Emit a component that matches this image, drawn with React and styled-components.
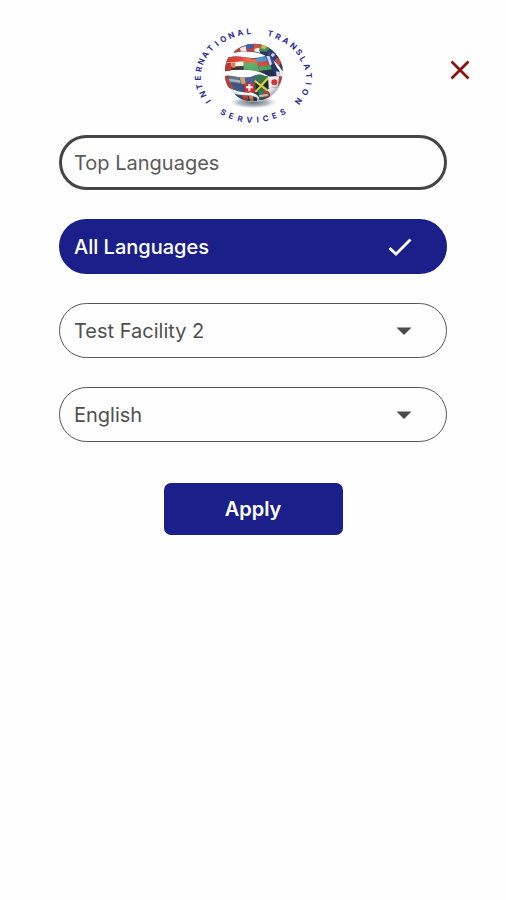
import React, { useState } from "react";
import styled, { createGlobalStyle, css } from "styled-components";

const GlobalStyle = createGlobalStyle`
  * {
    box-sizing: border-box;
  }

  body {
    margin: 0;
    background: #fefefe;
    font-family: Inter, "Open Sans", sans-serif;
  }
`;

const Page = styled.main`
  min-height: 100vh;
  padding: 15px 0 32px;
`;

const Header = styled.header`
  display: grid;
  grid-template-columns: 1fr auto 1fr;
  align-items: center;
  padding: 0 26px;
`;

const LogoSvg = styled.svg`
  grid-column: 2;
  display: block;
  width: 140px;
  height: 110px;
`;

const LogoText = styled.text`
  fill: #2c2c94;
  font-family: Inter, sans-serif;
  font-size: 24px;
  font-weight: 700;
`;

const CloseButton = styled.button`
  justify-self: end;
  display: grid;
  place-items: center;
  width: 40px;
  height: 40px;
  padding: 0;
  border: none;
  background: none;
  color: #8e1212;
  cursor: pointer;
`;

const FilterForm = styled.form`
  display: flex;
  flex-direction: column;
  gap: 29px;
  padding: 10px 59px 0;
`;

const pill = css`
  width: 100%;
  height: 55px;
  border-radius: 28px;
  font-family: inherit;
  font-size: 20px;
  line-height: 24px;
  cursor: pointer;
`;

const OptionButton = styled.button`
  ${pill}
  display: flex;
  align-items: center;
  justify-content: space-between;
  padding: 0 32px 0 12px;
  border: 3px solid ${(props) => (props.$active ? "#1b1f8a" : "#454545")};
  background: ${(props) => (props.$active ? "#1b1f8a" : "#fefefe")};
  color: ${(props) => (props.$active ? "#ffffff" : "#5a5a5a")};
  font-weight: ${(props) => (props.$active ? 500 : 400)};
`;

const SelectBox = styled.div`
  position: relative;
`;

const Select = styled.select`
  ${pill}
  display: block;
  appearance: none;
  padding: 0 56px 0 14px;
  border: 1px solid #555555;
  background: #fefefe;
  color: #505050;
`;

const Caret = styled.svg`
  position: absolute;
  top: 24px;
  right: 35px;
  pointer-events: none;
`;

const ApplyButton = styled.button`
  align-self: center;
  width: 179px;
  height: 52px;
  margin-top: 12px;
  border: none;
  border-radius: 7px;
  background: #1b1f8a;
  color: #ffffff;
  font-family: inherit;
  font-size: 20px;
  font-weight: 600;
  cursor: pointer;
`;

// Each letter: centre x, centre y, rotation in degrees
const ringWords = [
  {
    text: "INTERNATIONAL",
    spots: [
      [85, 245, -122], [69, 223, -112], [58, 200, -102], [54, 174, -91], [57, 148, -80],
      [64, 125, -68], [76, 104, -58], [91, 85, -49], [110, 71, -41], [130, 58, -33],
      [154, 46, -25], [180, 38, -16], [206, 34, -7],
    ],
  },
  {
    text: "TRANSLATION",
    spots: [
      [271, 41, 13], [294, 50, 24], [317, 62, 32], [340, 78, 41], [357, 96, 50],
      [369, 117, 60], [381, 140, 70], [387, 167, 83], [385, 191, 96], [375, 216, 110],
      [355, 243, 124],
    ],
  },
  {
    text: "SERVICES",
    spots: [
      [130, 277, 26], [154, 288, 19], [180, 296, 12], [208, 300, 4], [233, 299, -4],
      [257, 295, -11], [283, 287, -19], [308, 276, -27],
    ],
  },
];

const letterWidth = { I: 6, L: 14, E: 15, S: 15, T: 16, R: 15, C: 18, A: 18, V: 18, N: 18, O: 18 };
const capHeight = 17;

// Moves a letter's centre to the start of its baseline
const letterOrigin = (letter, [cx, cy, angle]) => {
  const rad = (angle * Math.PI) / 180;
  const dx = -letterWidth[letter] / 2;
  const dy = capHeight / 2;
  return [
    cx + dx * Math.cos(rad) - dy * Math.sin(rad),
    cy + dx * Math.sin(rad) + dy * Math.cos(rad),
  ];
};

const RingWord = ({ text, spots }) => {
  const origins = spots.map((spot, i) => letterOrigin(text[i], spot));
  return (
    <LogoText
      x={origins.map((o) => o[0].toFixed(1)).join(" ")}
      y={origins.map((o) => o[1].toFixed(1)).join(" ")}
      rotate={spots.map((s) => s[2]).join(" ")}
    >
      {text}
    </LogoText>
  );
};

const Logo = () => (
  <LogoSvg viewBox="9 -15 420 330" role="img" aria-label="International Translation Services">
    <defs>
      <radialGradient id="shadow">
        <stop offset="0" stopColor="#4d5c66" stopOpacity="0.9" />
        <stop offset="0.6" stopColor="#7d8b94" stopOpacity="0.6" />
        <stop offset="1" stopColor="#c8d0d4" stopOpacity="0" />
      </radialGradient>
      <radialGradient id="shade" cx="0.45" cy="0.35" r="0.62">
        <stop offset="0" stopColor="#ffffff" stopOpacity="0.15" />
        <stop offset="0.75" stopColor="#ffffff" stopOpacity="0" />
        <stop offset="1" stopColor="#10182c" stopOpacity="0.3" />
      </radialGradient>
      <clipPath id="topBand">
        <path d="M160 98 C178 78 203 70 228 71 C266 74 295 98 307 138 C308 146 309 150 307 154 C296 132 278 116 258 108 C230 94 198 91 160 98 Z" />
      </clipPath>
      <clipPath id="middleBand">
        <path d="M146 112 C180 104 210 120 240 112 C253 110 262 106 274 108 C282 126 288 142 298 152 L301 168 C293 168 285 170 278 176 C255 160 232 151 205 150 C180 149 158 148 136 154 C135 138 138 124 146 112 Z" />
      </clipPath>
      <clipPath id="bottomBand">
        <path d="M135 168 C155 164 178 176 205 172 C224 170 226 161 246 164 C265 174 288 166 306 170 C304 182 299 194 291 203 C278 201 266 205 260 211 C268 216 272 222 268 230 C258 236 249 239 239 241 C241 232 232 222 214 217 C190 219 166 212 147 203 C139 193 136 180 135 168 Z" />
      </clipPath>
      <clipPath id="footBand">
        <path d="M164 222 C186 229 212 223 228 232 C234 236 233 241 229 243 C205 246 182 240 164 222 Z" />
      </clipPath>
    </defs>
    <ellipse cx="220" cy="247" rx="72" ry="19" fill="url(#shadow)" />
    <circle cx="222" cy="158" r="87" fill="#ffffff" />
    <g clipPath="url(#topBand)">
      <rect x="130" y="60" width="190" height="110" fill="#27345f" />
      <path d="M155 90 L185 75 L192 98 L155 104 Z" fill="#bd3a30" />
      <path d="M180 84 L198 77 L201 101 L184 101 Z" fill="#ece8e0" />
      <path d="M196 73 L218 70 L222 85 L200 88 Z" fill="#3a56a4" />
      <path d="M200 88 L222 83 L224 101 L202 102 Z" fill="#c2322d" />
      <path d="M220 69 L250 72 L242 90 L222 88 Z" fill="#d9443b" />
      <path d="M224 86 L245 82 L240 98 L222 94 Z" fill="#f1ede5" />
      <path d="M240 75 L270 84 L258 98 L237 92 Z" fill="#3c8a50" />
      <path d="M246 74 L262 80 L254 88 L243 84 Z" fill="#e2b13b" />
      <path d="M238 94 L260 95 L280 117 L256 113 Z" fill="#1f2b53" />
      <path d="M262 90 L290 108 L280 122 L262 105 Z" fill="#2c3f7a" />
      <path d="M278 98 L286 104 L278 112 L272 106 Z" fill="#c9cfdb" />
      <path d="M290 112 L303 124 L298 140 L284 121 Z" fill="#bf4b3d" />
    </g>
    <g clipPath="url(#middleBand)">
      <rect x="130" y="100" width="180" height="85" fill="#24325c" />
      <path d="M130 108 L196 106 L192 126 L134 130 Z" fill="#d6382d" />
      <path d="M134 128 L193 124 L191 139 L134 143 Z" fill="#f3eee5" />
      <path d="M134 141 L192 138 L190 154 L132 160 Z" fill="#2a2624" />
      <path d="M134 130 L154 128 L155 157 L133 160 Z" fill="#ba3329" />
      <path d="M155 128 L166 127 L166 143 L156 143 Z" fill="#db7c41" />
      <path d="M190 112 L235 118 L232 133 L190 128 Z" fill="#e85436" />
      <path d="M190 128 L233 129 L234 144 L191 142 Z" fill="#44a254" />
      <path d="M191 141 L235 142 L240 160 L191 154 Z" fill="#44a254" />
      <path d="M230 114 L256 109 L264 124 L232 130 Z" fill="#3294ce" />
      <path d="M232 127 L264 122 L270 136 L234 141 Z" fill="#d3392e" />
      <path d="M234 140 L270 134 L276 149 L240 153 Z" fill="#429650" />
      <path d="M254 106 L276 105 L284 128 L270 139 Z" fill="#2749a0" />
      <path d="M259 108 L268 107 L276 132 L270 137 Z" fill="#d5d9e3" />
      <path d="M240 153 L278 148 L286 175 L270 178 Z" fill="#1c2649" />
      <path d="M278 142 L300 151 L292 165 L280 159 Z" fill="#28366e" />
      <path d="M288 154 L309 158 L309 175 L290 172 Z" fill="#d8dadb" />
    </g>
    <g clipPath="url(#bottomBand)">
      <rect x="130" y="155" width="180" height="95" fill="#35436d" />
      <path d="M130 165 L150 164 L166 222 L142 207 Z" fill="#b4372f" />
      <path d="M145 164 L176 169 L182 192 L150 190 Z" fill="#596f8b" />
      <path d="M146 176 L180 181 L182 188 L149 184 Z" fill="#a8b5bf" />
      <path d="M152 190 L188 192 L193 213 L162 212 Z" fill="#3c547c" />
      <path d="M178 169 L194 170 L198 192 L184 192 Z" fill="#cc9e6d" />
      <path d="M191 191 L222 187 L224 219 L196 219 Z" fill="#d82b27" />
      <path d="M205 192 h6 v7 h7 v6 h-7 v8 h-6 v-8 h-7 v-6 h7 Z" fill="#ffffff" />
      <path d="M194 170 L228 165 L232 188 L198 191 Z" fill="#40568a" />
      <path d="M225 158 L267 170 L264 213 L226 218 Z" fill="#287044" />
      <path d="M224 182 L265 214 M264 174 L226 216" stroke="#edc739" strokeWidth="6" />
      <path d="M226 188 L239 198 L228 209 Z M264 180 L251 195 L264 207 Z" fill="#24221e" />
      <path d="M264 168 L303 166 L300 205 L267 209 Z" fill="#f3eeeb" />
      <circle cx="283" cy="187" r="9" fill="#d8292a" />
      <path d="M297 166 L309 169 L302 199 L294 205 Z" fill="#b5443a" />
      <path d="M218 218 L240 216 L240 246 L208 246 Z" fill="#242b50" />
      <path d="M236 215 L253 213 L256 239 L236 244 Z" fill="#2c7758" />
      <path d="M251 212 L272 215 L273 230 L254 239 Z" fill="#c2342e" />
      <path d="M238 225 L264 221 L266 228 L239 232 Z" fill="#ecddb9" />
    </g>
    <g clipPath="url(#footBand)">
      <rect x="160" y="215" width="80" height="35" fill="#242b50" />
      <path d="M160 218 L186 222 L190 242 L168 238 Z" fill="#3d4c5e" />
      <path d="M186 222 L202 222 L206 246 L190 246 Z" fill="#c93f34" />
      <path d="M206 222 L218 224 L222 246 L210 246 Z" fill="#df8a3d" />
    </g>
    <circle cx="222" cy="158" r="87" fill="url(#shade)" />
    {ringWords.map((word) => (
      <RingWord key={word.text} {...word} />
    ))}
  </LogoSvg>
);

const CheckIcon = () => (
  <svg width="24" height="18" viewBox="0 0 24 18" fill="none" aria-hidden="true">
    <path d="M1.5 10 L8 16 L22.5 1.5" stroke="#ffffff" strokeWidth="2.8" />
  </svg>
);

const CloseIcon = () => (
  <svg width="20" height="20" viewBox="0 0 20 20" aria-hidden="true">
    <path d="M1.5 1.5 L18.5 18.5 M18.5 1.5 L1.5 18.5" stroke="currentColor" strokeWidth="2.8" />
  </svg>
);

const Dropdown = ({ label, value, options, onChange }) => (
  <SelectBox>
    <Select aria-label={label} value={value} onChange={(e) => onChange(e.target.value)}>
      {options.map((option) => (
        <option key={option}>{option}</option>
      ))}
    </Select>
    <Caret width="16" height="9" viewBox="0 0 16 9" aria-hidden="true">
      <path d="M0.5 0.5 H15.5 L8 8 Z" fill="#4a4a4a" />
    </Caret>
  </SelectBox>
);

const languageGroups = ["Top Languages", "All Languages"];

const App = () => {
  const [group, setGroup] = useState("All Languages");
  const [facility, setFacility] = useState("Test Facility 2");
  const [language, setLanguage] = useState("English");

  const handleApply = (e) => {
    e.preventDefault();
  };

  return (
    <>
      <GlobalStyle />
      <Page>
        <Header>
          <Logo />
          <CloseButton type="button" aria-label="Close">
            <CloseIcon />
          </CloseButton>
        </Header>
        <FilterForm onSubmit={handleApply}>
          {languageGroups.map((name) => (
            <OptionButton
              key={name}
              type="button"
              $active={group === name}
              aria-pressed={group === name}
              onClick={() => setGroup(name)}
            >
              {name}
              {group === name && <CheckIcon />}
            </OptionButton>
          ))}
          <Dropdown
            label="Facility"
            value={facility}
            options={["Test Facility 2"]}
            onChange={setFacility}
          />
          <Dropdown
            label="Language"
            value={language}
            options={["English"]}
            onChange={setLanguage}
          />
          <ApplyButton type="submit">Apply</ApplyButton>
        </FilterForm>
      </Page>
    </>
  );
};

export default App;
